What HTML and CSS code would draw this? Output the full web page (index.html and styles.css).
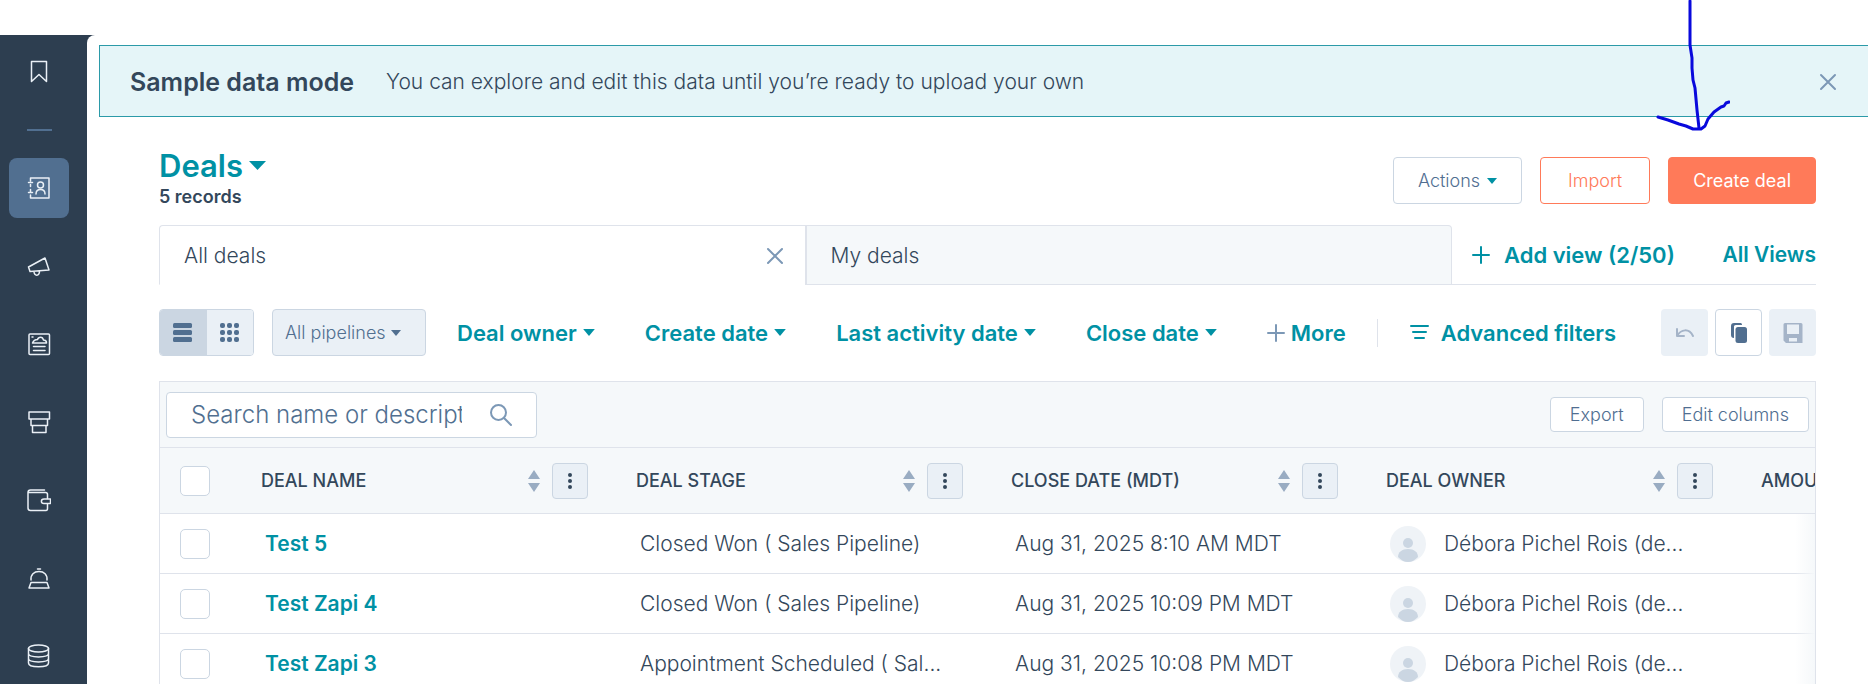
FILE: index.html
```html
<!DOCTYPE html>
<html lang="en">
<head>
<meta charset="utf-8">
<meta name="viewport" content="width=device-width, initial-scale=1">
<title>Deals</title>
<link rel="stylesheet" href="styles.css">
</head>
<body>
<svg class="symbols" aria-hidden="true">
  <symbol id="caret" viewBox="0 0 10 6"><path d="M0 0h10L5 6z" fill="currentColor"/></symbol>
  <symbol id="cross" viewBox="0 0 18 18"><path d="M2 2l14 14M16 2L2 16" fill="none" stroke="currentColor" stroke-width="2" stroke-linecap="round"/></symbol>
  <symbol id="plus" viewBox="0 0 18 18"><path d="M9 1v16M1 9h16" fill="none" stroke="currentColor" stroke-width="2" stroke-linecap="round"/></symbol>
  <symbol id="sort" viewBox="0 0 12 22"><path d="M6 0l6 9H0zM0 13h12l-6 9z" fill="currentColor"/></symbol>
  <symbol id="dots" viewBox="0 0 4 16"><g fill="currentColor"><circle cx="2" cy="2" r="2"/><circle cx="2" cy="8" r="2"/><circle cx="2" cy="14" r="2"/></g></symbol>
  <symbol id="person" viewBox="0 0 36 36"><circle cx="18" cy="18" r="18" fill="#eff3f7"/><circle cx="18" cy="17" r="5" fill="#cbd6e2"/><path d="M8 31c0-5 4-8 10-8s10 3 10 8c-3 3-6 5-10 5s-7-2-10-5z" fill="#cbd6e2"/></symbol>
</svg>

<div class="app">
  <nav class="sidebar" aria-label="Main">
    <a class="nav-item" href="#" aria-label="Bookmarks"><svg width="24" height="24" viewBox="0 0 24 24"><path d="M4.500 1.500h15v20L12 14.500l-7.500 7z"/></svg></a>
    <div class="nav-divider"></div>
    <a class="nav-item nav-item-active" href="#" aria-label="CRM"><svg width="24" height="24" viewBox="0 0 24 24"><path d="M3.500 5V2h18.500v20H3.500v-3M3.500 8.500v2M3.500 13.500v2M1.500 6.500h4M1.500 16.500h4"/><circle cx="13.500" cy="9" r="3"/><path d="M9 18c0-3 2-4.500 4.500-4.500S18 15 18 18"/></svg></a>
    <a class="nav-item" href="#" aria-label="Marketing"><svg width="24" height="24" viewBox="0 0 24 24"><path d="M1.500 13L18 4l4 12L3 17.500zM7 17.500c0 5 5.500 5 5.500-.500"/></svg></a>
    <a class="nav-item" href="#" aria-label="Content"><svg width="24" height="24" viewBox="0 0 24 24"><rect x="2" y="2" width="20.500" height="20.500" rx="1"/><path d="M5.500 11h14c0-2-1-3-3-3-1-4-5-3.500-6-.500-2 0-4 1-5 3.500zM6.500 14.500h11.500M6.500 18.500h11.500M5 5h1"/></svg></a>
    <a class="nav-item" href="#" aria-label="Commerce"><svg width="24" height="24" viewBox="0 0 24 24"><path d="M2 2h20.500v7H2zM4 9h16.500v6.500H4zM5.500 15.500h13.500v7H5.500z"/></svg></a>
    <a class="nav-item" href="#" aria-label="Payments"><svg width="24" height="24" viewBox="0 0 24 24"><path d="M17.500 2H3.500C1.500 2 1 3.500 1 4.500V20c0 1.500 1 2.500 2.500 2.500h15.500c1 0 1.500-1 1.500-2v-4M1.500 4.500h17c1.500 0 2 1 2 2v4"/><path d="M17 11h6.500v4.500H17c-3.500 0-3.500-4.500 0-4.500z"/></svg></a>
    <a class="nav-item" href="#" aria-label="Service"><svg width="24" height="24" viewBox="0 0 24 24"><path d="M10.500 3h3M4 14C3.500 8.500 7 5.500 12 5.500s8.500 3 8 8.500M4 16.500h16l2 5.500H2z"/></svg></a>
    <a class="nav-item" href="#" aria-label="Data"><svg width="24" height="24" viewBox="0 0 24 24"><ellipse cx="11.500" cy="4.500" rx="10" ry="3.500"/><path d="M1.500 4.500v14.500c0 5 20 5 20 0V4.500M1.500 9.500c0 4.500 20 4.500 20 0M1.500 14.500c0 4.500 20 4.500 20 0"/></svg></a>
  </nav>

  <main class="content">
    <section class="banner">
      <strong class="banner-title">Sample data mode</strong>
      <span>You can explore and edit this data until you’re ready to upload your own</span>
      <button class="icon-button banner-close" aria-label="Dismiss"><svg width="18" height="18"><use href="#cross"/></svg></button>
    </section>

    <div class="page">
      <header class="page-header">
        <div>
          <h1 class="title"><button class="title-button">Deals <svg width="17" height="9" viewBox="0 0 10 6" preserveAspectRatio="none"><path d="M0 0h10L5 6z" fill="currentColor"/></svg></button></h1>
          <p class="record-count">5 records</p>
        </div>
        <div class="header-actions">
          <button class="button">Actions <svg class="teal" width="10" height="6"><use href="#caret"/></svg></button>
          <button class="button button-outline">Import</button>
          <button class="button button-primary">Create deal</button>
        </div>
      </header>

      <div class="views">
        <div class="tab tab-active"><button class="tab-label">All deals</button><button class="icon-button" aria-label="Close view"><svg width="18" height="18"><use href="#cross"/></svg></button></div>
        <div class="tab"><button class="tab-label">My deals</button></div>
        <div class="view-links">
          <button class="link-button add-view"><svg width="18" height="18"><use href="#plus"/></svg>Add view (2/50)</button>
          <a class="all-views" href="#">All Views</a>
        </div>
      </div>

      <div class="filters">
        <div class="view-toggle">
          <button class="toggle toggle-on" aria-label="List view"><svg width="20" height="20" viewBox="0 0 20 20" fill="currentColor"><rect x="0" y="0" width="19" height="5" rx="1.500"/><rect x="0" y="7" width="19" height="5" rx="1.500"/><rect x="0" y="14" width="19" height="5" rx="1.500"/></svg></button>
          <button class="toggle" aria-label="Board view"><svg width="20" height="20" viewBox="0 0 20 20" fill="currentColor"><rect x="0" y="0" width="5" height="5" rx="2"/><rect x="7" y="0" width="5" height="5" rx="2"/><rect x="14" y="0" width="5" height="5" rx="2"/><rect x="0" y="7" width="5" height="5" rx="2"/><rect x="7" y="7" width="5" height="5" rx="2"/><rect x="14" y="7" width="5" height="5" rx="2"/><rect x="0" y="14" width="5" height="5" rx="2"/><rect x="7" y="14" width="5" height="5" rx="2"/><rect x="14" y="14" width="5" height="5" rx="2"/></svg></button>
        </div>
        <div class="pipeline">
          <select class="pipeline-select" aria-label="Pipeline"><option>All pipelines</option></select>
          <svg class="pipeline-caret" width="10" height="6"><use href="#caret"/></svg>
        </div>
        <div class="filter-list">
          <button class="link-button">Deal owner <svg width="12" height="7"><use href="#caret"/></svg></button>
          <button class="link-button">Create date <svg width="12" height="7"><use href="#caret"/></svg></button>
          <button class="link-button">Last activity date <svg width="12" height="7"><use href="#caret"/></svg></button>
          <button class="link-button">Close date <svg width="12" height="7"><use href="#caret"/></svg></button>
          <button class="link-button"><svg class="muted" width="18" height="18"><use href="#plus"/></svg>More</button>
        </div>
        <button class="link-button advanced"><svg width="20" height="20" viewBox="0 0 20 20"><path d="M2 3h17M4 9h13M6 15h9" fill="none" stroke="currentColor" stroke-width="2" stroke-linecap="round"/></svg>Advanced filters</button>
        <div class="tools">
          <button class="tool" aria-label="Undo" disabled><svg width="20" height="20" viewBox="0 0 20 20" fill="none" stroke="currentColor" stroke-width="2" stroke-linecap="round" stroke-linejoin="round"><path d="M2 6v7h7M2 13C6 6 14 5 18 13"/></svg></button>
          <button class="tool tool-on" aria-label="Copy"><svg width="20" height="20" viewBox="0 0 20 20" fill="currentColor"><path d="M5 15c-2 0-3-1-3-3V3c0-2 1-3 3-3h6c1.500 0 2 .500 2 2H7C5 2 5 3 5 4z"/><rect x="6.500" y="4" width="11.500" height="16" rx="2.500"/></svg></button>
          <button class="tool" aria-label="Save" disabled><svg width="20" height="20" viewBox="0 0 20 20"><path fill="currentColor" fill-rule="evenodd" d="M2 0h16a1.500 1.500 0 0 1 1.500 1.500V20H3L.500 17.500V1.500A1.500 1.500 0 0 1 2 0zM4 1.500V11h12V1.500zM6 15v3.500h8V15z"/></svg></button>
        </div>
      </div>

      <section class="grid">
        <div class="grid-bar">
          <label class="search">
            <input class="search-input" type="text" aria-label="Search deals" placeholder="Search name or description">
            <svg width="24" height="24" viewBox="0 0 24 24" fill="none" stroke="currentColor" stroke-width="2" stroke-linecap="round"><circle cx="9.500" cy="9.500" r="7.500"/><path d="M15 15l7 7"/></svg>
          </label>
          <div class="grid-actions">
            <button class="button button-small">Export</button>
            <button class="button button-small">Edit columns</button>
          </div>
        </div>
        <div class="table-wrap">
          <table class="table">
            <colgroup><col class="col-check"><col><col><col><col><col></colgroup>
            <thead>
              <tr>
                <th><input class="check" type="checkbox" aria-label="Select all deals"></th>
                <th><div class="head"><span class="head-label">DEAL NAME</span><svg class="sort" width="12" height="22"><use href="#sort"/></svg><button class="menu" aria-label="Deal name options"><svg width="4" height="16"><use href="#dots"/></svg></button></div></th>
                <th><div class="head"><span class="head-label">DEAL STAGE</span><svg class="sort" width="12" height="22"><use href="#sort"/></svg><button class="menu" aria-label="Deal stage options"><svg width="4" height="16"><use href="#dots"/></svg></button></div></th>
                <th><div class="head"><span class="head-label">CLOSE DATE (MDT)</span><svg class="sort" width="12" height="22"><use href="#sort"/></svg><button class="menu" aria-label="Close date options"><svg width="4" height="16"><use href="#dots"/></svg></button></div></th>
                <th><div class="head"><span class="head-label">DEAL OWNER</span><svg class="sort" width="12" height="22"><use href="#sort"/></svg><button class="menu" aria-label="Deal owner options"><svg width="4" height="16"><use href="#dots"/></svg></button></div></th>
                <th><div class="head"><span class="head-label">AMOUNT</span></div></th>
              </tr>
            </thead>
            <tbody>
              <tr>
                <td><input class="check" type="checkbox" aria-label="Select Test 5"></td>
                <td><a class="deal" href="#">Test 5</a></td>
                <td>Closed Won ( Sales Pipeline)</td>
                <td>Aug 31, 2025 8:10 AM MDT</td>
                <td><div class="owner"><svg width="36" height="36"><use href="#person"/></svg>Débora Pichel Rois (de...</div></td>
                <td></td>
              </tr>
              <tr>
                <td><input class="check" type="checkbox" aria-label="Select Test Zapi 4"></td>
                <td><a class="deal" href="#">Test Zapi 4</a></td>
                <td>Closed Won ( Sales Pipeline)</td>
                <td>Aug 31, 2025 10:09 PM MDT</td>
                <td><div class="owner"><svg width="36" height="36"><use href="#person"/></svg>Débora Pichel Rois (de...</div></td>
                <td></td>
              </tr>
              <tr>
                <td><input class="check" type="checkbox" aria-label="Select Test Zapi 3"></td>
                <td><a class="deal" href="#">Test Zapi 3</a></td>
                <td>Appointment Scheduled ( Sal...</td>
                <td>Aug 31, 2025 10:08 PM MDT</td>
                <td><div class="owner"><svg width="36" height="36"><use href="#person"/></svg>Débora Pichel Rois (de...</div></td>
                <td></td>
              </tr>
            </tbody>
          </table>
        </div>
      </section>
    </div>
  </main>

  <svg class="arrow" width="76" height="134" viewBox="0 0 76 134" aria-hidden="true"><path d="M36 1V45L38 58V68L39 80L41 88L43 110L45 128M4 117L14 120L25 124L32 126L39 129L47 129L51 126L54 119L60 112L67 107L70 106L72 103L75 102"/></svg>
</div>
</body>
</html>
```
FILE: styles.css
```css
:root {
  --ink: #33475b;
  --slate: #516f90;
  --teal: #0091a4;
  --coral: #ff7a59;
  --line: #dfe3eb;
  --edge: #cbd6e2;
  --fog: #f5f8fa;
  --mist: #eaf0f6;
  --muted: #7c98b6;
}

* { box-sizing: border-box; }

body {
  margin: 0;
  background: #fff;
  color: var(--ink);
  font-family: Inter, "Liberation Sans", sans-serif;
  font-size: 21px;
  font-weight: 300;
  line-height: 28px;
}

button, input, select { font: inherit; color: inherit; }

button {
  display: inline-flex;
  align-items: center;
  justify-content: center;
  padding: 0;
  border: 0;
  background: none;
  white-space: nowrap;
  cursor: pointer;
}

a { color: var(--teal); text-decoration: none; }
svg { flex: none; }

.symbols { position: absolute; width: 0; height: 0; }

.app {
  position: relative;
  display: flex;
  height: 100vh;
  padding-top: 35px;
  overflow: hidden;
}

.sidebar {
  flex: none;
  display: flex;
  flex-direction: column;
  align-items: center;
  gap: 18px;
  width: 95px;
  padding: 7px 17px 0 0;
  background: #2d3e50;
}

.nav-item {
  flex: none;
  display: flex;
  align-items: center;
  justify-content: center;
  width: 60px;
  height: 60px;
  border-radius: 8px;
}

.nav-item svg {
  fill: none;
  stroke: #eaf0f6;
  stroke-width: 1.5;
  stroke-linejoin: round;
  stroke-linecap: round;
}

.nav-item-active { background: #516f90; }
.nav-divider { flex: none; width: 25px; height: 2px; margin: 9px 0; background: #516f90; }

.content {
  flex: 1;
  min-width: 0;
  margin-left: -8px;
  padding: 10px 0 0 12px;
  border-top-left-radius: 8px;
  background: #fff;
}

.banner {
  display: flex;
  align-items: center;
  gap: 32px;
  height: 72px;
  padding: 2px 31px 0 30px;
  border: 1px solid #2b9aa8;
  border-right: 0;
  background: #e5f5f8;
}

.banner-title { font-size: 25px; font-weight: 600; }
.banner-close { margin-left: auto; }
.icon-button { color: var(--muted); }

.page { padding: 31px 52px 0 60px; }

.page-header { display: flex; justify-content: space-between; align-items: flex-start; }
.title { margin: 0; font-size: 31px; line-height: 35px; font-weight: 600; color: var(--teal); }
.title-button { gap: 6px; }
.record-count { margin: 0; font-size: 18px; font-weight: 600; }
.header-actions { display: flex; gap: 18px; padding-top: 9px; }

.button {
  gap: 7px;
  height: 47px;
  padding: 0 24px;
  border: 1px solid var(--edge);
  border-radius: 4px;
  background: #fff;
  color: #506e91;
  font-size: 18px;
}

.teal { color: var(--teal); }
.muted { color: var(--muted); }
.button-outline { padding: 0 27px; border-color: var(--coral); color: var(--coral); }
.button-primary { border-color: var(--coral); background: var(--coral); color: #fff; font-weight: 400; }
.button-small { height: 35px; padding: 0 19px; }

.views { display: flex; height: 60px; margin-top: 14px; }

.tab {
  flex: 1;
  display: flex;
  align-items: center;
  justify-content: space-between;
  padding: 2px 21px 0 24px;
  border: 1px solid var(--line);
  border-left-width: 2px;
  border-top-right-radius: 4px;
  background: var(--fog);
}

.tab-active {
  border-right: 0;
  border-bottom-color: transparent;
  border-left-width: 1px;
  border-radius: 4px 0 0 0;
  background: #fff;
}

.view-links {
  flex: none;
  display: flex;
  justify-content: space-between;
  align-items: center;
  width: 364px;
  padding-left: 20px;
  border-bottom: 1px solid var(--line);
}

.link-button { gap: 6px; color: var(--teal); font-size: 22px; font-weight: 600; }
.add-view { gap: 14px; }
.all-views { font-weight: 600; }

.filters { display: flex; align-items: center; margin-top: 24px; }

.view-toggle {
  display: flex;
  width: 95px;
  height: 47px;
  border: 1px solid var(--edge);
  border-radius: 4px;
  overflow: hidden;
  color: var(--slate);
}

.toggle { flex: 1; background: var(--mist); }
.toggle-on { background: var(--edge); }

.pipeline { position: relative; margin-left: 18px; color: var(--slate); }

.pipeline-select {
  appearance: none;
  width: 154px;
  height: 47px;
  padding: 0 12px;
  border: 1px solid var(--edge);
  border-radius: 4px;
  background: var(--mist);
  font-size: 18px;
}

.pipeline-caret { position: absolute; top: 21px; right: 25px; pointer-events: none; }

.filter-list {
  display: flex;
  gap: 50px;
  padding: 0 31px;
  border-right: 1px solid var(--line);
}

.advanced { margin-left: 31px; gap: 12px; }
.tools { display: flex; gap: 7px; margin-left: auto; }

.tool {
  width: 47px;
  height: 47px;
  border-radius: 4px;
  background: var(--mist);
  color: #a5b4c8;
}

.tool-on { border: 1px solid var(--edge); background: #fff; color: var(--slate); }

.grid { margin-top: 25px; border: 1px solid var(--line); }

.grid-bar {
  display: flex;
  align-items: center;
  justify-content: space-between;
  height: 66px;
  padding: 0 6px;
  border-bottom: 1px solid var(--line);
  background: var(--fog);
}

.search {
  display: flex;
  align-items: center;
  justify-content: space-between;
  width: 371px;
  height: 46px;
  padding: 0 23px 0 24px;
  border: 1px solid var(--edge);
  border-radius: 4px;
  background: #fff;
  color: var(--muted);
}

.search-input {
  width: 271px;
  padding: 0;
  border: 0;
  outline: 0;
  background: none;
  font-size: 24px;
}

.search-input::placeholder { color: #516f90; opacity: 1; }

.grid-actions { display: flex; gap: 18px; }

.table-wrap { position: relative; overflow: hidden; }

.table-wrap::after {
  content: "";
  position: absolute;
  top: 66px;
  right: 0;
  bottom: 0;
  width: 20px;
  background: linear-gradient(to right, #f5f8fa00, #f5f8fa);
}

.table { width: 1950px; table-layout: fixed; border-collapse: separate; border-spacing: 0; }
.col-check { width: 75px; }

th, td {
  padding: 0 22px 0 30px;
  border-bottom: 1px solid var(--line);
  text-align: left;
  white-space: nowrap;
}

th { height: 66px; padding-left: 26px; background: var(--fog); font-size: 18px; font-weight: 500; }
td { height: 60px; }
th:first-child, td:first-child { padding: 0 0 0 20px; }

.head { display: flex; align-items: center; }
.head-label { flex: 1; }
.sort { color: #99acc2; margin-right: 12px; }

.menu {
  width: 36px;
  height: 36px;
  border: 1px solid var(--edge);
  border-radius: 4px;
  background: var(--mist);
}

.check {
  appearance: none;
  display: block;
  width: 30px;
  height: 30px;
  margin: 0;
  border: 1px solid var(--edge);
  border-radius: 5px;
  background: #fff;
}

.deal { font-weight: 600; }
.owner { display: flex; align-items: center; gap: 18px; }

.arrow { position: absolute; top: 0; right: 138px; pointer-events: none; }
.arrow path { fill: none; stroke: #0909dc; stroke-width: 3; stroke-linejoin: round; stroke-linecap: round; }
```
